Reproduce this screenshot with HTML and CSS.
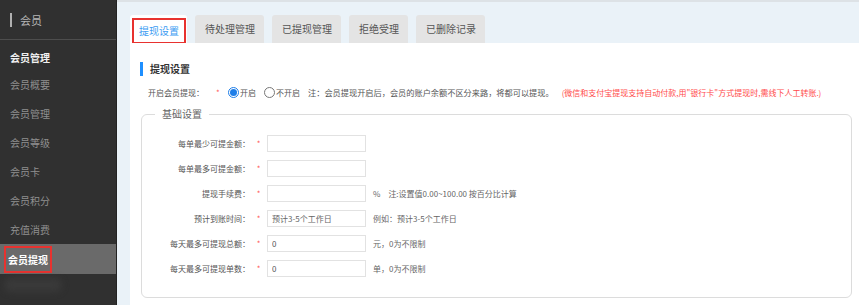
FILE: index.html
```html
<!DOCTYPE html>
<html lang="zh-CN">
<head>
  <meta charset="UTF-8">
  <meta name="viewport" content="width=device-width, initial-scale=1.0">
  <title>会员提现</title>
  <link rel="stylesheet" href="styles.css">
</head>
<body>
  <div class="layout">
    <aside class="sidebar">
      <div class="side-title"><span class="side-bar"></span>会员</div>
      <div class="side-group">会员管理</div>
      <ul class="side-menu">
        <li>会员概要</li>
        <li>会员管理</li>
        <li>会员等级</li>
        <li>会员卡</li>
        <li>会员积分</li>
        <li>充值消费</li>
        <li class="active"><span class="mark">会员提现</span></li>
      </ul>
      <div class="side-blur"></div>
    </aside>

    <main class="main">
      <div class="tabs">
        <div class="tab current"><span class="mark">提现设置</span></div>
        <div class="tab">待处理管理</div>
        <div class="tab">已提现管理</div>
        <div class="tab">拒绝受理</div>
        <div class="tab">已删除记录</div>
      </div>

      <div class="panel">
        <h2 class="panel-title">提现设置</h2>

        <div class="switch-row">
          <span class="switch-label">开启会员提现：</span>
          <span class="req">*</span>
          <span class="radio checked"></span><span class="radio-text">开启</span>
          <span class="radio"></span><span class="radio-text">不开启</span>
          <span class="note">注：会员提现开启后，会员的账户余额不区分来路，将都可以提现。</span>
          <span class="warn">(微信和支付宝提现支持自动付款,用"银行卡"方式提现时,需线下人工转账.)</span>
        </div>

        <fieldset class="basic">
          <legend>基础设置</legend>

          <div class="form-row">
            <label>每单最少可提金额：</label><span class="req">*</span>
            <input type="text" class="field">
          </div>
          <div class="form-row">
            <label>每单最多可提金额：</label><span class="req">*</span>
            <input type="text" class="field">
          </div>
          <div class="form-row">
            <label>提现手续费：</label><span class="req">*</span>
            <input type="text" class="field">
            <span class="tip"><span class="unit">%</span>注:设置值0.00~100.00 按百分比计算</span>
          </div>
          <div class="form-row">
            <label>预计到账时间：</label><span class="req">*</span>
            <input type="text" class="field" placeholder="预计3-5个工作日">
            <span class="tip">例如：预计3-5个工作日</span>
          </div>
          <div class="form-row">
            <label>每天最多可提现总额：</label><span class="req">*</span>
            <input type="text" class="field" value="0">
            <span class="tip">元，0为不限制</span>
          </div>
          <div class="form-row">
            <label>每天最多可提现单数：</label><span class="req">*</span>
            <input type="text" class="field" value="0">
            <span class="tip">单，0为不限制</span>
          </div>
        </fieldset>
      </div>
    </main>
  </div>
</body>
</html>
```

FILE: styles.css
```css
* {
  box-sizing: border-box;
}
html, body {
  margin: 0;
  height: 100%;
}
body {
  font-family: "Noto Sans CJK SC", "Liberation Sans", sans-serif;
  color: #555;
  overflow: hidden;
}
.layout {
  display: flex;
  height: 305px;
}

/* sidebar */
.sidebar {
  width: 117px;
  flex-shrink: 0;
  background-color: #303030;
  border-right: 1px solid #232323;
  position: relative;
}
.side-title {
  height: 40px;
  display: flex;
  align-items: center;
  padding-left: 10px;
  font-size: 11px;
  color: #b5b5b5;
  border-bottom: 1px solid #4d4d4d;
}
.side-bar {
  width: 2px;
  height: 14px;
  background-color: #b0b0b0;
  margin-right: 8px;
}
.side-group {
  margin-top: 8px;
  height: 20px;
  line-height: 20px;
  padding-left: 10px;
  font-size: 10px;
  font-weight: bold;
  color: #f0f0f0;
  margin-bottom: 2px;
}
.side-menu {
  list-style: none;
  margin: 0;
  padding: 0;
}
.side-menu li {
  height: 29px;
  line-height: 29px;
  padding-left: 10px;
  font-size: 10px;
  color: #8f8f8f;
}
.side-menu li.active {
  background-color: #6a6a6a;
  color: #fff;
  font-weight: bold;
  padding-left: 6px;
  height: 30px;
  display: flex;
  align-items: center;
}
.side-menu li.active .mark {
  line-height: 23px;
  padding: 0 2px;
}
.mark {
  outline: 2px solid #e8322f;
  outline-offset: 0;
}
.side-blur {
  position: absolute;
  left: 4px;
  top: 278px;
  width: 58px;
  height: 14px;
  background-color: #393939;
  border-radius: 7px;
  filter: blur(3px);
}

/* main area */
.main {
  flex: 1;
  background-color: #eaf2f8;
  border-top: 2px solid #dde2e6;
  padding: 13px 0 0 13px;
  display: flex;
  flex-direction: column;
}
.tabs {
  display: flex;
  gap: 8px;
  height: 28px;
}
.tab {
  height: 28px;
  line-height: 28px;
  padding: 0 9px 0 10px;
  font-size: 10px;
  color: #555;
  background-color: #e4e4e4;
  border-radius: 3px 3px 0 0;
}
.tab.current {
  background-color: #fff;
  color: #3d9cf2;
  padding: 5px 3px 0 4px;
  line-height: 18px;
}
.tab.current .mark {
  display: inline-block;
  padding: 0 5px;
  line-height: 22px;
}

.panel {
  flex: 1;
  background-color: #fff;
  padding: 19px 7px 0 10px;
}
.panel-title {
  margin: 0;
  height: 14px;
  line-height: 14px;
  border-left: 3px solid #1e8fff;
  padding-left: 7px;
  font-size: 10px;
  font-weight: bold;
  color: #333;
}
.switch-row {
  display: flex;
  align-items: center;
  height: 12px;
  margin: 10px 0 10px 8px;
  font-size: 8px;
  white-space: nowrap;
}
.switch-label {
  width: 68px;
}
.req {
  color: #ff5b5b;
  font-size: 8px;
}
.switch-row .req {
  width: 12px;
}
.radio {
  width: 11px;
  height: 11px;
  border: 1px solid #777;
  border-radius: 50%;
  margin-right: 1px;
  display: inline-flex;
  align-items: center;
  justify-content: center;
}
.radio.checked {
  border-color: #1e7ee8;
}
.radio.checked::after {
  content: "";
  width: 7px;
  height: 7px;
  border-radius: 50%;
  background-color: #1e7ee8;
}
.radio-text {
  margin-right: 8px;
}
.radio-text:last-of-type {
  margin-right: 3px;
}
.note {
  font-size: 8.2px;
  margin-right: 8px;
}
.warn {
  color: #ff4a4a;
}

/* fieldset */
.basic {
  margin: 0 0 0 1px;
  padding: 15px 0 20px 0;
  border: 1px solid #dcdcdc;
  border-radius: 6px;
  min-width: 0;
}
.basic legend {
  margin-left: 13px;
  padding: 0 7px;
  font-size: 10px;
  line-height: 12px;
  color: #666;
}
.form-row {
  display: flex;
  align-items: center;
  height: 17px;
  margin-bottom: 8px;
  font-size: 8px;
}
.form-row:last-child {
  margin-bottom: 0;
}
.form-row label {
  width: 108px;
  text-align: right;
  color: #555;
}
.form-row .req {
  width: 17px;
  text-align: center;
}
.field {
  width: 99px;
  height: 17px;
  border: 1px solid #e2e2e2;
  padding: 0 4px;
  font-family: inherit;
  font-size: 8px;
  color: #555;
  outline: none;
}
.field::placeholder {
  color: #666;
}
.tip {
  margin-left: 7px;
  color: #666;
}
.unit {
  margin-right: 8px;
}
```
